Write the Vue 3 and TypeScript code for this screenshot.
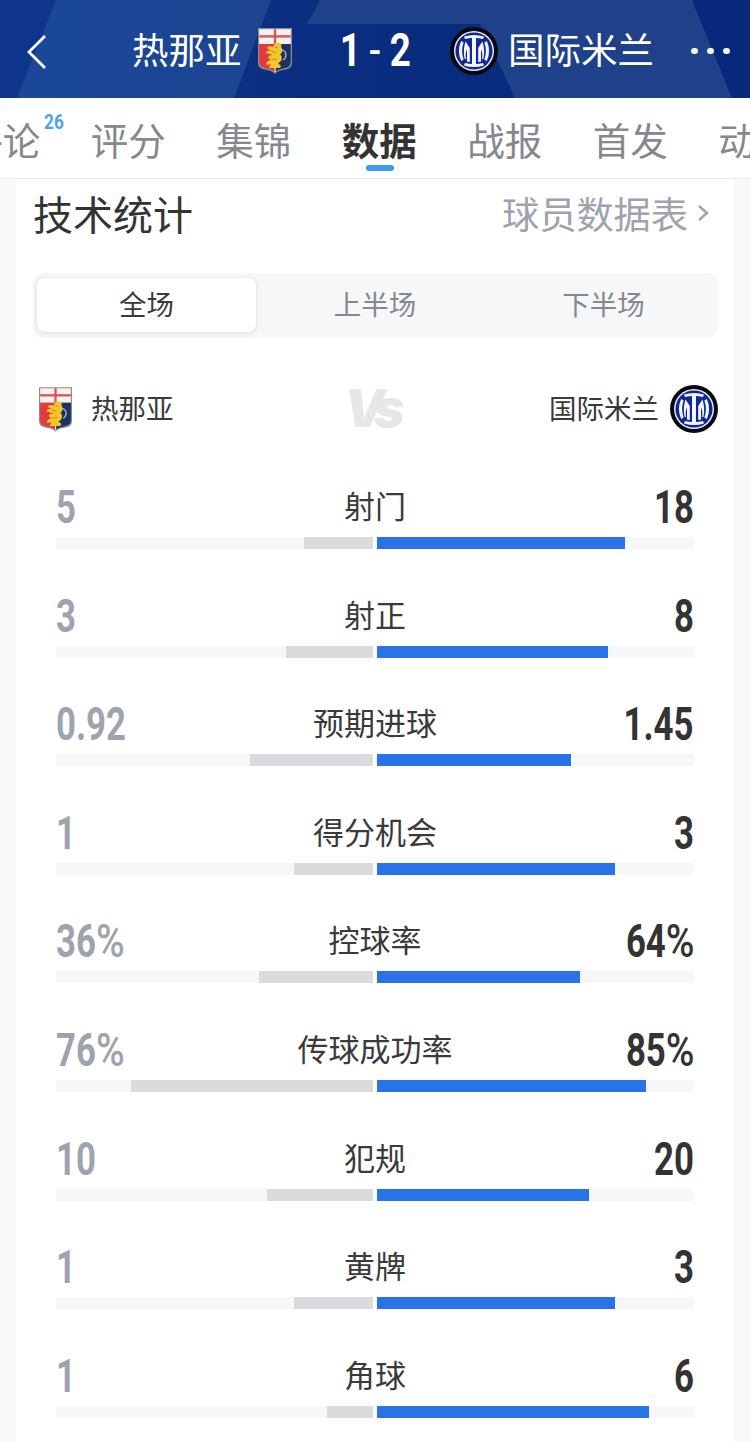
<script setup lang="ts">
interface Stat { label: string; home: string; away: string; homeW: number; awayW: number }
const tabs = ['评论', '评分', '集锦', '数据', '战报', '首发', '动态']
const stats: Stat[] = [
  { label: '射门', home: '5', away: '18', homeW: 69, awayW: 248 },
  { label: '射正', home: '3', away: '8', homeW: 87, awayW: 231 },
  { label: '预期进球', home: '0.92', away: '1.45', homeW: 123, awayW: 194 },
  { label: '得分机会', home: '1', away: '3', homeW: 79, awayW: 238 },
  { label: '控球率', home: '36%', away: '64%', homeW: 114, awayW: 203 },
  { label: '传球成功率', home: '76%', away: '85%', homeW: 242, awayW: 269 },
  { label: '犯规', home: '10', away: '20', homeW: 106, awayW: 212 },
  { label: '黄牌', home: '1', away: '3', homeW: 79, awayW: 238 },
  { label: '角球', home: '1', away: '6', homeW: 46, awayW: 272 },
]
const digits = (v: string): string => v.replace('%', '')
const hasPct = (v: string): boolean => v.endsWith('%')
</script>

<template>
  <div class="page">
    <header class="top">
      <svg class="top-bg" viewBox="0 0 750 98" preserveAspectRatio="none">
        <defs>
          <linearGradient id="band" x1="0" y1="0" x2="1" y2="0">
            <stop offset="0" stop-color="#1a4798" />
            <stop offset="1" stop-color="#1d4592" />
          </linearGradient>
        </defs>
        <polygon points="56,0 271,0 234,98 17,98" fill="url(#band)" />
        <polygon points="320,0 307,24 480,24 515,98 732,98 692,0" fill="#1e4189" />
      </svg>
      <button class="back" aria-label="返回">
        <svg width="24" height="38" viewBox="0 0 24 38"><path d="M21 3 L5 19 L21 35" fill="none" stroke="#fff" stroke-width="2.8" /></svg>
      </button>
      <span class="team-name home-name">热那亚</span>
      <svg class="crest-top" viewBox="0 0 36 48">
        <use href="#genoa" />
      </svg>
      <span class="score"><b>1</b><i>-</i><b>2</b></span>
      <svg class="inter-top" viewBox="0 0 48 48"><use href="#inter" /></svg>
      <span class="team-name away-name">国际米兰</span>
      <span class="more"><i></i><i></i><i></i></span>
    </header>

    <nav class="tabs">
      <div v-for="(t, i) in tabs" :key="t" class="tab" :class="{ active: t === '数据' }">
        {{ t }}
        <sup v-if="i === 0" class="badge">26</sup>
        <span v-if="t === '数据'" class="bar-mark"></span>
      </div>
    </nav>

    <main class="card">
      <div class="head">
        <h2>技术统计</h2>
        <div class="link">球员数据表<svg width="12" height="20" viewBox="0 0 12 20"><path d="M2 3 L10 10 L2 17" fill="none" stroke="#9ea3ad" stroke-width="2.4" /></svg></div>
      </div>

      <div class="switch">
        <div class="seg on">全场</div>
        <div class="seg">上半场</div>
        <div class="seg">下半场</div>
      </div>

      <div class="teams">
        <div class="side">
          <svg class="crest" viewBox="0 0 36 48"><use href="#genoa" /></svg>
          <span>热那亚</span>
        </div>
        <span class="vs">Vs</span>
        <div class="side">
          <span>国际米兰</span>
          <svg class="inter" viewBox="0 0 48 48"><use href="#inter" /></svg>
        </div>
      </div>

      <section class="stats">
        <div v-for="s in stats" :key="s.label" class="row">
          <div class="line">
            <span class="num left"><span class="val">{{ digits(s.home) }}<span v-if="hasPct(s.home)" class="pct">%</span></span></span>
            <span class="label">{{ s.label }}</span>
            <span class="num right"><span class="val">{{ digits(s.away) }}<span v-if="hasPct(s.away)" class="pct">%</span></span></span>
          </div>
          <div class="bars">
            <div class="track to-right"><div class="fill grey" :style="{ width: s.homeW + 'px' }"></div></div>
            <div class="track"><div class="fill blue" :style="{ width: s.awayW + 'px' }"></div></div>
          </div>
        </div>
      </section>
    </main>

    <svg class="defs" width="0" height="0">
      <defs>
        <g id="genoa">
          <path d="M1 1 H35 V36 Q35 42 26 43 Q20 44 18 47 Q16 44 10 43 Q1 42 1 36 Z" fill="#8b8d92" />
          <rect x="2.2" y="2.2" width="31.6" height="14.8" fill="#f5f1ef" />
          <rect x="2.2" y="8.2" width="31.6" height="2.4" fill="#d8565a" />
          <rect x="16.8" y="2.2" width="2.4" height="14.8" fill="#d8565a" />
          <path d="M2.2 17 H18 V45 Q16 43 10 41.5 Q2.2 40.5 2.2 35 Z" fill="#e13b40" />
          <path d="M18 17 H33.8 V35 Q33.8 40.5 26 41.5 Q20 43 18 45 Z" fill="#1b3262" />
          <path d="M17.5 45 V36 h1.2 v9 Z" fill="#eee" />
          <path d="M18 16 C22 15 26 17 24 20 C26 22 26 26 23 27 C26 30 25 35 21 36 L24 39 L23 41 L12 41 L14 37 L10 38 C8 36 11 33 14 33 L11 31 C11 29 13 28 16 28 L9 26 C9 23 12 23 14 24 L10 21 C11 19 14 19 16 20 Z" fill="#f2c52a" />
          <path d="M14 24 L19 26 M15 33 L20 32 M18 20 L21 21" stroke="#b8862a" stroke-width=".9" fill="none" />
          <path d="M25 23 C30 24 30 31 26 33" fill="none" stroke="#c9c9c9" stroke-width="1.2" />
        </g>
        <g id="inter">
          <circle cx="24" cy="24" r="24" fill="#07080f" />
          <circle cx="24" cy="24" r="20" fill="#eef1f8" />
          <circle cx="24" cy="24" r="18.6" fill="#11279a" />
          <path d="M14 9.5 Q24 6.5 34 9.5 L33 12 Q28.5 11 26 11 V37 Q28.5 37 33 36 L34 38.5 Q24 41.5 14 38.5 L15 36 Q19.5 37 22 37 V11 Q19.5 11 15 12 Z" fill="#f4f6fb" />
          <path d="M11.2 14 L13.6 15.6 Q10.6 24 13.6 32.4 L11.2 34 Q6.6 24 11.2 14 Z" fill="#f4f6fb" />
          <path d="M36.8 14 L34.4 15.6 Q37.4 24 34.4 32.4 L36.8 34 Q41.4 24 36.8 14 Z" fill="#f4f6fb" />
          <path d="M15.6 14.5 L19.8 21 V35 L17 34.5 V22.5 Q15 26 16 32 L14.7 32 Q12.6 23 15.6 14.5 Z" fill="#f4f6fb" />
          <path d="M32.4 14.5 L28.2 21 V35 L31 34.5 V22.5 Q33 26 32 32 L33.3 32 Q35.4 23 32.4 14.5 Z" fill="#f4f6fb" />
        </g>
      </defs>
    </svg>
  </div>
</template>

<style>
html, body { margin: 0; background: #f7f8fa; }
</style>

<style scoped>
.page {
  width: 750px;
  height: 1442px;
  overflow: hidden;
  position: relative;
  background: #f7f8fa;
  font-family: "Noto Sans CJK SC", "Noto Sans", sans-serif;
  color: #333;
}
.defs { position: absolute; }
.top {
  position: relative;
  height: 98px;
  background: linear-gradient(90deg, #10368c 0%, #0a2d80 45%, #08287c 100%);
  color: #fff;
  display: flex;
  align-items: center;
}
.top-bg { position: absolute; inset: 0; width: 100%; height: 100%; }
.top > *:not(.top-bg) { position: relative; }
.back {
  background: none; border: 0; padding: 0;
  margin-left: 24px;
  width: 24px; height: 38px;
  margin-top: 6px;
}
.team-name { font-size: 36.5px; line-height: 50px; margin-bottom: 1px; }
.home-name { margin-left: 84px; width: 110px; }
.crest-top { width: 36px; height: 48px; margin-left: 15px; margin-top: 3px; }
.score {
  margin-left: 44px;
  width: 76px;
  display: flex;
  justify-content: space-between;
  font: 700 46px/50px Roboto, sans-serif;
  margin-top: 2px;
}
.score b { display: inline-block; transform: scaleX(.8); font-weight: 700; }
.score i { font-style: normal; font-size: 34px; }
.inter-top { width: 48px; height: 48px; margin-left: 37px; margin-top: 3px; }
.away-name { margin-left: 10px; width: 146px; }
.more { display: flex; gap: 9.5px; margin-left: 37px; margin-top: 4px; }
.more i { width: 6.5px; height: 6.5px; border-radius: 50%; background: #f3f5fa; }

.tabs {
  height: 80px;
  background: #fff;
  border-bottom: 1px solid #e9eaec;
  display: flex;
  overflow: hidden;
}
.tab {
  flex: 0 0 125.5px;
  position: relative;
  text-align: center;
  font-size: 37.5px;
  line-height: 82px;
  color: #85888e;
  white-space: nowrap;
  box-sizing: border-box;
}
.tab:first-child { margin-left: -60px; }
.tab.active { color: #333; font-weight: 700; }
.badge {
  position: absolute;
  left: 104px;
  top: 13px;
  font: 700 21px/22px Roboto, sans-serif;
  color: #4ca4e8;
  display: inline-block;
  transform: scaleX(.82);
  transform-origin: left;
}
.bar-mark {
  position: absolute;
  left: 49px;
  top: 67px;
  width: 28px;
  height: 6px;
  border-radius: 3px;
  background: #3d9bee;
}

.card {
  margin: 0 16px;
  height: 1300px;
  background: #fff;
  box-sizing: border-box;
  padding: 0 16px 0 17px;
}
.head {
  height: 68px;
  display: flex;
  align-items: center;
  justify-content: space-between;
  padding: 0 9px 0 0;
  margin-bottom: 26px;
}
.head h2 { margin: 0; font-size: 40px; font-weight: 400; line-height: 68px; color: #333; }
.link { display: flex; align-items: center; gap: 9px; font-size: 37.2px; line-height: 68px; color: #9ea3ad; }
.switch {
  height: 65px;
  background: #f6f7f9;
  border-radius: 10px;
  display: grid;
  grid-template-columns: repeat(3, 1fr);
  align-items: start;
  padding: 5px 5px 0 4px;
  box-sizing: border-box;
  column-gap: 9.5px;
}
.seg {
  height: 54px;
  line-height: 50px;
  text-align: center;
  font-size: 27.5px;
  color: #85888e;
  border-radius: 8px;
}
.seg.on { background: #fff; color: #3a3a3c; box-shadow: 0 1px 5px rgba(40, 50, 70, .14); }
.teams {
  height: 46px;
  margin-top: 48px;
  display: flex;
  align-items: center;
  justify-content: space-between;
  position: relative;
  padding-left: 5px;
}
.side { display: flex; align-items: center; gap: 18px; font-size: 27.5px; color: #3a3a3c; }
.side span { margin-bottom: 4px; }
.side:last-child { gap: 11px; }
.crest { width: 35px; height: 47px; }
.inter { width: 48px; height: 48px; }
.vs {
  position: absolute;
  left: 311px;
  top: -9px;
  font: italic 900 52px/64px Inter, Roboto, sans-serif;
  letter-spacing: -9px;
  color: #e6e7e9;
}
.stats { margin-top: 48px; padding: 0 24px 0 23px; }
.row { height: 108.6px; }
.line {
  height: 56px;
  display: grid;
  grid-template-columns: 1fr auto 1fr;
  align-items: center;
}
.label { font-size: 31px; color: #3a3a3c; line-height: 50px; padding-bottom: 6px; }
.num { font: 700 47px/54px Roboto, sans-serif; padding-bottom: 2px; }
.val { display: inline-block; transform: scaleX(.74); }
.pct { display: inline-block; width: 38px; text-align: left; font-weight: 500; transform: scaleX(1.12); transform-origin: left; }
.left { color: #9ea3ad; text-align: left; }
.left .val { transform-origin: left; }
.right { color: #333; text-align: right; }
.right .val { transform-origin: right; }
.bars { display: flex; gap: 4px; margin-top: 1px; }
.track { flex: 1; height: 12px; background: #f6f7f9; display: flex; }
.to-right { justify-content: flex-end; }
.fill { height: 100%; }
.grey { background: #dadbdf; }
.blue { background: #2a72e8; }
</style>
